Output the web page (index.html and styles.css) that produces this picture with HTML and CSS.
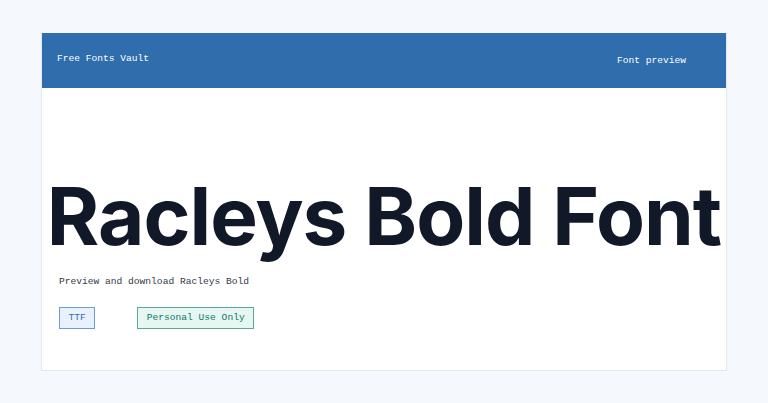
FILE: index.html
```html
<!DOCTYPE html>
<html lang="en">
  <head>
    <meta charset="UTF-8" />
    <meta name="viewport" content="width=device-width, initial-scale=1.0" />
    <title>Racleys Bold Font</title>
    <link rel="stylesheet" href="styles.css">
  </head>
  <body>
    <div class="page">
      <header class="topbar">
        <span class="brand">Free Fonts Vault</span>
        <nav class="nav">
          <span class="nav-link">Font preview</span>
        </nav>
      </header>
      <main class="content">
        <h1 class="sample">Racleys Bold Font</h1>
        <p class="lead">Preview and download Racleys Bold</p>
        <div class="tags">
          <span class="tag tag-format">TTF</span>
          <span class="tag tag-license">Personal Use Only</span>
        </div>
      </main>
    </div>
  </body>
</html>
```

FILE: styles.css
```css
* {
  padding: 0;
  margin: 0;
  box-sizing: border-box;
}
body {
  background: #f5f9fe;
  font-family: "Liberation Mono", monospace;
  font-size: 9.6px;
  padding-top: 33px;
}
.page {
  width: 686px;
  margin: 0 auto;
  background: #ffffff;
  border: 1px solid #e3e8f0;
  border-top: none;
}
.topbar {
  background: #2f6dad;
  height: 55px;
  display: flex;
  justify-content: space-between;
  align-items: center;
  padding: 0 40px 0 15px;
  color: #ffffff;
}
.brand {
  margin-top: -5px;
}
.nav-link {
  margin-top: -4px;
}
.content {
  padding: 78px 17px 41px;
}
/* big specimen line, wider than the column on purpose */
.sample {
  font-family: Inter, "Noto Sans", sans-serif;
  font-weight: 700;
  font-size: 80px;
  line-height: 100px;
  letter-spacing: -1px;
  color: #111827;
  text-align: center;
  white-space: nowrap;
  margin: 0 -40px;
}
.lead {
  color: #333a48;
  margin-top: 10px;
}
.tags {
  display: flex;
  gap: 42px;
  margin-top: 20px;
}
.tag {
  display: inline-block;
  height: 22px;
  line-height: 20px;
  padding: 0 8.5px;
  border: 1px solid;
}
.tag-format {
  background: #e8f1fd;
  border-color: #6c9bd6;
  color: #2f6dad;
}
.tag-license {
  background: #e6f7f1;
  border-color: #5aa89a;
  color: #127567;
}
```
